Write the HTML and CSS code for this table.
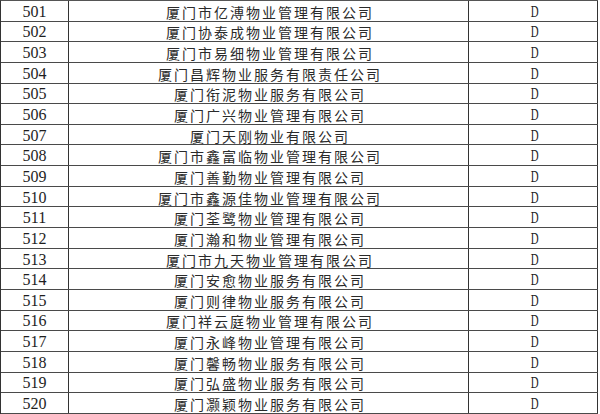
FILE: index.html
```html
<!DOCTYPE html>
<html lang="zh-CN">
<head>
<meta charset="utf-8">
<title>物业企业名单</title>
<link rel="stylesheet" href="styles.css">
</head>
<body>
<div class="sheet">
  <div class="row"><div class="num">501</div><div class="name">厦门市亿溥物业管理有限公司</div><div class="grade"><span>D</span></div></div>
  <div class="row"><div class="num">502</div><div class="name">厦门协泰成物业管理有限公司</div><div class="grade"><span>D</span></div></div>
  <div class="row"><div class="num">503</div><div class="name">厦门市易细物业管理有限公司</div><div class="grade"><span>D</span></div></div>
  <div class="row"><div class="num">504</div><div class="name">厦门昌辉物业服务有限责任公司</div><div class="grade"><span>D</span></div></div>
  <div class="row"><div class="num">505</div><div class="name">厦门衔泥物业服务有限公司</div><div class="grade"><span>D</span></div></div>
  <div class="row"><div class="num">506</div><div class="name">厦门广兴物业管理有限公司</div><div class="grade"><span>D</span></div></div>
  <div class="row"><div class="num">507</div><div class="name">厦门天刚物业有限公司</div><div class="grade"><span>D</span></div></div>
  <div class="row"><div class="num">508</div><div class="name">厦门市鑫富临物业管理有限公司</div><div class="grade"><span>D</span></div></div>
  <div class="row"><div class="num">509</div><div class="name">厦门善勤物业管理有限公司</div><div class="grade"><span>D</span></div></div>
  <div class="row"><div class="num">510</div><div class="name">厦门市鑫源佳物业管理有限公司</div><div class="grade"><span>D</span></div></div>
  <div class="row"><div class="num">511</div><div class="name">厦门荃鹭物业管理有限公司</div><div class="grade"><span>D</span></div></div>
  <div class="row"><div class="num">512</div><div class="name">厦门瀚和物业管理有限公司</div><div class="grade"><span>D</span></div></div>
  <div class="row"><div class="num">513</div><div class="name">厦门市九天物业管理有限公司</div><div class="grade"><span>D</span></div></div>
  <div class="row"><div class="num">514</div><div class="name">厦门安愈物业服务有限公司</div><div class="grade"><span>D</span></div></div>
  <div class="row"><div class="num">515</div><div class="name">厦门则律物业服务有限公司</div><div class="grade"><span>D</span></div></div>
  <div class="row"><div class="num">516</div><div class="name">厦门祥云庭物业管理有限公司</div><div class="grade"><span>D</span></div></div>
  <div class="row"><div class="num">517</div><div class="name">厦门永峰物业管理有限公司</div><div class="grade"><span>D</span></div></div>
  <div class="row"><div class="num">518</div><div class="name">厦门馨畅物业服务有限公司</div><div class="grade"><span>D</span></div></div>
  <div class="row"><div class="num">519</div><div class="name">厦门弘盛物业服务有限公司</div><div class="grade"><span>D</span></div></div>
  <div class="row"><div class="num">520</div><div class="name">厦门灏颖物业服务有限公司</div><div class="grade"><span>D</span></div></div>
</div>
</body>
</html>
```

FILE: styles.css
```css
html, body {
  margin: 0;
  padding: 0;
  background: #ffffff;
}

.sheet {
  width: 598px;
  box-sizing: border-box;
  border-top: 1px solid #555555;
  border-left: 1px solid #333333;
  display: flex;
  flex-direction: column;
  color: #1e1e1e;
}

.row {
  display: grid;
  grid-template-columns: 68px 400px 129px;
  height: 20.65px;
  box-sizing: border-box;
  border-bottom: 1px solid #4a4a4a;
}

.row > div {
  box-sizing: border-box;
  border-right: 1px solid #333333;
  display: flex;
  align-items: center;
  justify-content: center;
  padding-top: 2px;
  font-size: 16px;
  line-height: 16px;
  overflow: hidden;
}

.num {
  font-family: "Liberation Serif", "Times New Roman", serif;
}

.name.name {
  font-family: "Noto Sans CJK SC", "Noto Sans CJK JP", sans-serif;
  font-weight: 400;
  color: #2a2a2a;
  font-size: 14px;
  line-height: 14px;
  letter-spacing: 2px;
  padding-left: 3px;
}

.grade {
  font-family: "Liberation Serif", "Times New Roman", serif;
}

.grade span {
  display: inline-block;
  transform: scaleX(0.68);
  margin-left: 3px;
}
```
